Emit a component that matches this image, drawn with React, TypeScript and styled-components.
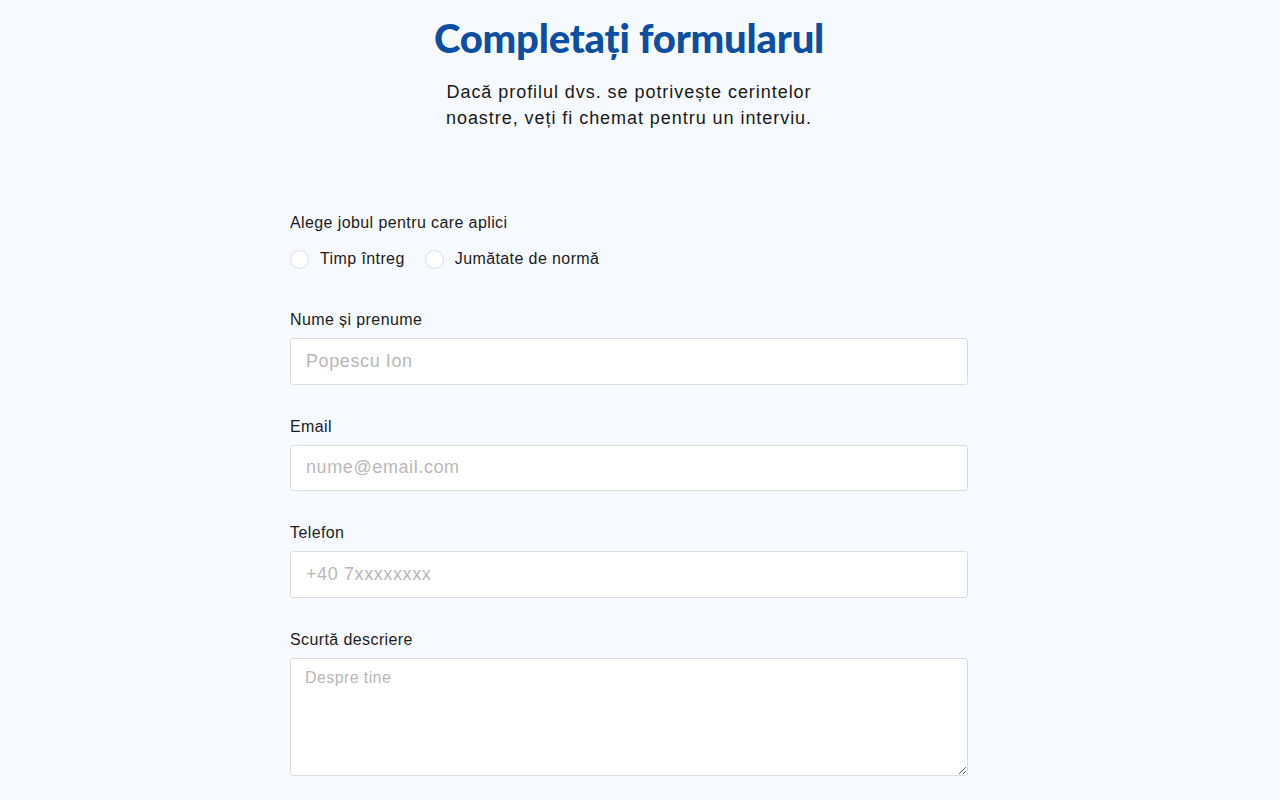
import React from 'react';
import styled, { createGlobalStyle } from 'styled-components';

const GlobalStyle = createGlobalStyle`
	html, body {
		margin: 0;
		padding: 0;
		background: #f6faff;
	}
	body {
		font-family: 'Liberation Sans', Arial, sans-serif;
		color: #1c1c1c;
	}
	* {
		box-sizing: border-box;
	}
`;

const Page = styled.div`
	display: flex;
	flex-direction: column;
	align-items: center;
	padding: 14px 22px 0 0;
	min-height: 800px;
`;

const Title = styled.h1`
	margin: 0;
	font-family: 'Lato', 'Noto Sans', sans-serif;
	font-weight: 900;
	font-size: 40px;
	line-height: 48px;
	color: #0b4ea2;
	letter-spacing: -0.2px;
`;

const Subtitle = styled.p`
	margin: 17px 0 0;
	width: 400px;
	text-align: center;
	font-size: 18px;
	line-height: 26px;
	letter-spacing: 0.95px;
	color: #181818;
`;

const Form = styled.form`
	width: 678px;
	margin-top: 82px;
	display: flex;
	flex-direction: column;
	gap: 32px;
`;

const Field = styled.div<{ $extra?: number }>`
	display: flex;
	flex-direction: column;
	gap: 8px;
	margin-bottom: ${(p) => p.$extra || 0}px;
`;

const Label = styled.label`
	font-size: 16px;
	line-height: 20px;
	letter-spacing: 0.4px;
	color: #1c1c1c;
`;

const RadioRow = styled.div`
	display: flex;
	gap: 20px;
	margin-top: 8px;
`;

const RadioOption = styled.label`
	display: flex;
	align-items: center;
	gap: 11px;
	font-size: 16px;
	line-height: 20px;
	letter-spacing: 0.4px;
	cursor: pointer;
`;

const RadioDot = styled.span`
	width: 19px;
	height: 19px;
	border-radius: 50%;
	border: 1px solid #d9dce0;
	background: #fff;
`;

const Input = styled.input`
	height: 46.5px;
	padding: 0 15px;
	border: 1px solid #dcdcdc;
	border-radius: 3px;
	background: #fff;
	font-family: inherit;
	font-size: 18px;
	letter-spacing: 0.6px;
	outline: none;
	&::placeholder {
		color: #b8b8b8;
	}
`;

const TextArea = styled.textarea`
	height: 118px;
	padding: 9px 14px;
	border: 1px solid #dcdcdc;
	border-radius: 3px;
	background: #fff;
	font-family: inherit;
	font-size: 16px;
	line-height: 20px;
	letter-spacing: 0.4px;
	outline: none;
	resize: vertical;
	&::placeholder {
		color: #b8b8b8;
	}
`;

export default function App() {
	return (
		<>
			<GlobalStyle />
			<Page>
				<Title>Completați formularul</Title>
				<Subtitle>
					Dacă profilul dvs. se potrivește cerintelor noastre, veți fi chemat pentru un interviu.
				</Subtitle>
				<Form onSubmit={(e) => e.preventDefault()}>
					<Field $extra={9}>
						<Label>Alege jobul pentru care aplici</Label>
						<RadioRow>
							<RadioOption>
								<RadioDot />
								Timp întreg
							</RadioOption>
							<RadioOption>
								<RadioDot />
								Jumătate de normă
							</RadioOption>
						</RadioRow>
					</Field>
					<Field>
						<Label>Nume și prenume</Label>
						<Input placeholder="Popescu Ion" />
					</Field>
					<Field>
						<Label>Email</Label>
						<Input placeholder="nume@email.com" />
					</Field>
					<Field>
						<Label>Telefon</Label>
						<Input placeholder="+40 7xxxxxxxx" />
					</Field>
					<Field>
						<Label>Scurtă descriere</Label>
						<TextArea placeholder="Despre tine" />
					</Field>
				</Form>
			</Page>
		</>
	);
}
